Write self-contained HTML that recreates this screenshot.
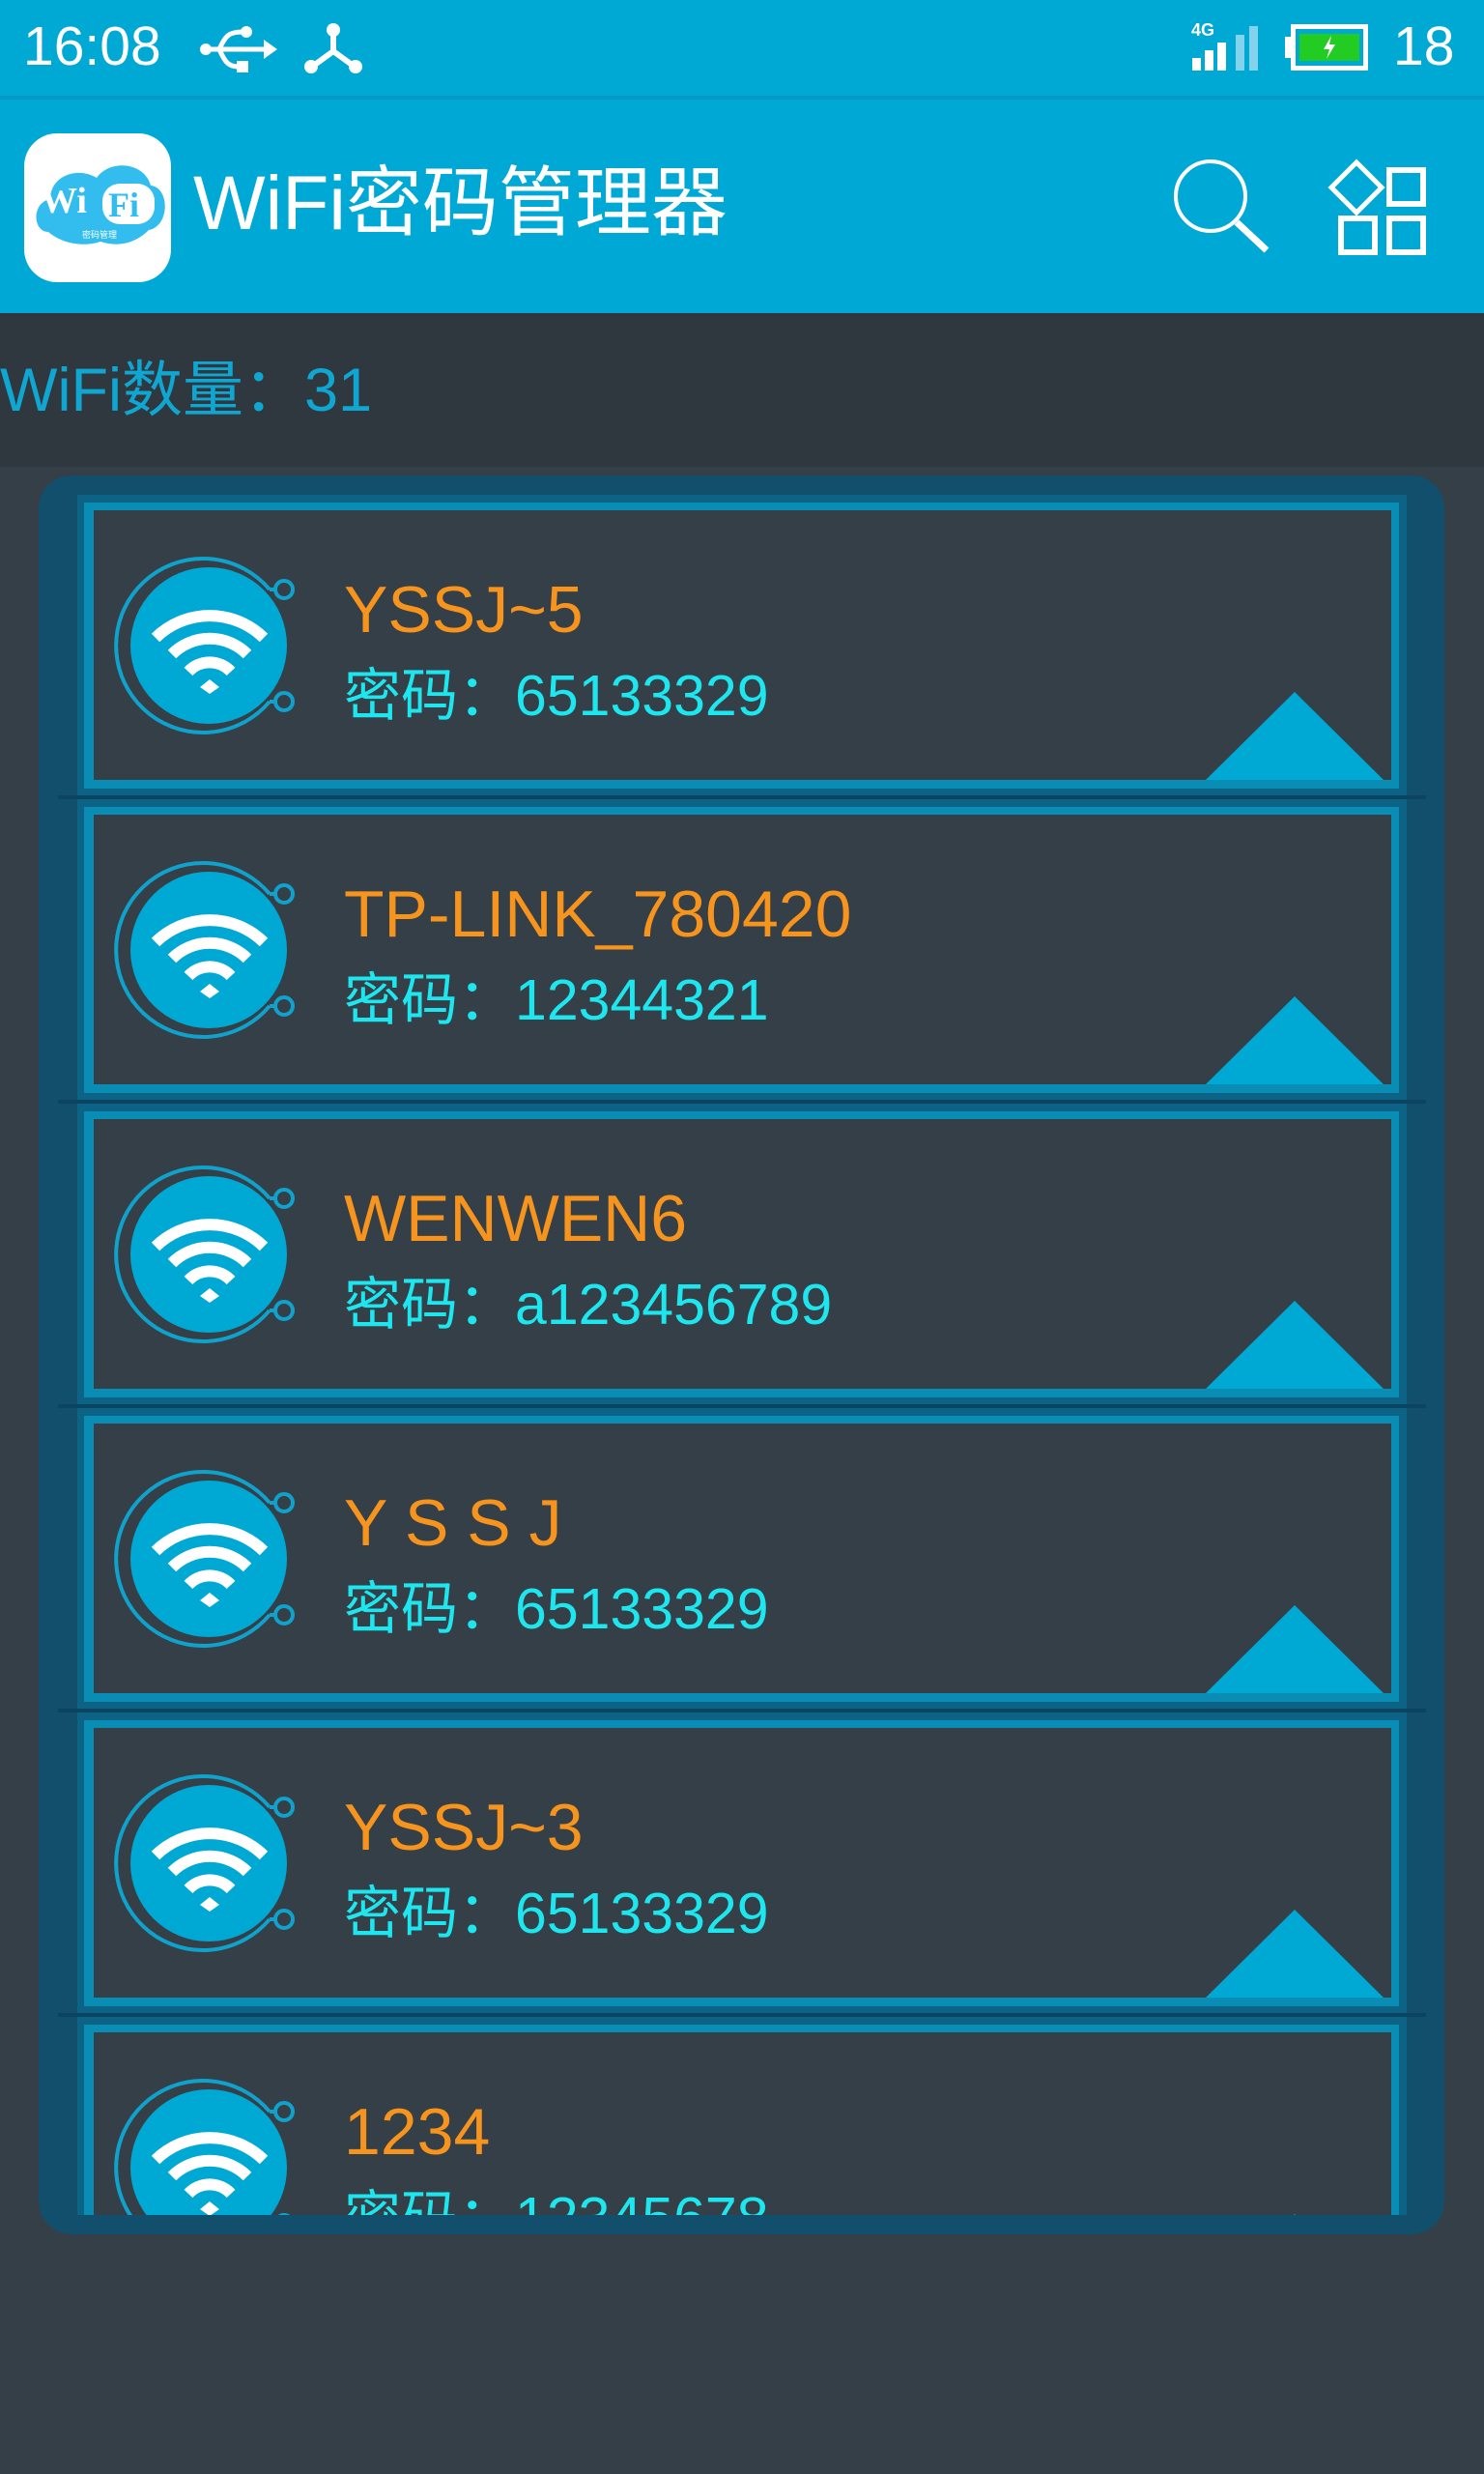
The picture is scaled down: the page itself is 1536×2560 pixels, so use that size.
<!DOCTYPE html>
<html><head><meta charset="utf-8"><style>
*{margin:0;padding:0;box-sizing:border-box}
body{width:1536px;height:2560px;background:#353f48;position:relative;overflow:hidden;font-family:"Liberation Sans","Noto Sans CJK SC",sans-serif}
.abs{position:absolute}
.item{position:absolute;left:80px;width:1376px;height:311px;background:#0c6386}
.cy{position:absolute;left:7px;top:8px;right:8px;bottom:7px;background:#0a8db5}
.dk{position:absolute;left:17px;top:16px;right:16px;bottom:16px;background:#353f48;overflow:hidden}
.sep{position:absolute;left:60px;width:1416px;height:4px;background:#0b4460}
.name{position:absolute;left:259px;top:69px;font-size:68px;color:#f7941d;white-space:nowrap;line-height:1}
.pw{position:absolute;left:259px;top:163px;font-size:59px;color:#1ee6ee;white-space:nowrap;line-height:1}
.tri{position:absolute;left:1151px;top:188px;width:0;height:0;border-left:92px solid transparent;border-right:92px solid transparent;border-bottom:91px solid #00a8d4}
.ic{position:absolute;left:0;top:0}
</style></head><body>
<div class="abs" style="left:0;top:0;width:1536px;height:101px;background:#00a8d4"></div>
<div class="abs" style="left:0;top:99px;width:1536px;height:4px;background:#0499c4"></div>
<div class="abs" style="left:24px;top:20px;font-size:57px;color:#fff;line-height:1">16:08</div>
<svg class="abs" style="left:205px;top:25px" width="85" height="52" viewBox="0 0 85 52">
<circle cx="8" cy="26" r="6" fill="#fff"/><path d="M8 26H72" stroke="#fff" stroke-width="5"/><path d="M68 16L82 26L68 36Z" fill="#fff"/>
<path d="M22 26C28 12 32 8 46 8" stroke="#fff" stroke-width="5" fill="none"/><circle cx="50" cy="8" r="6" fill="#fff"/>
<path d="M22 26C28 40 32 44 42 44" stroke="#fff" stroke-width="5" fill="none"/><rect x="40" y="38" width="12" height="12" fill="#fff"/></svg>
<svg class="abs" style="left:313px;top:23px" width="64" height="54" viewBox="0 0 64 54">
<path d="M32 8V30L10 46M32 30L54 46" stroke="#fff" stroke-width="6" fill="none"/><circle cx="32" cy="8" r="7" fill="#fff"/><circle cx="9" cy="46" r="7" fill="#fff"/><circle cx="55" cy="46" r="7" fill="#fff"/></svg>
<div class="abs" style="left:1233px;top:22px;font-size:18px;font-weight:bold;color:#fff;line-height:1">4G</div>
<div class="abs" style="left:1234px;top:60px;width:9px;height:13px;background:#fff"></div>
<div class="abs" style="left:1247px;top:52px;width:9px;height:21px;background:#fff"></div>
<div class="abs" style="left:1260px;top:44px;width:9px;height:29px;background:#fff"></div>
<div class="abs" style="left:1279px;top:36px;width:9px;height:37px;background:#84d3ec"></div>
<div class="abs" style="left:1293px;top:27px;width:9px;height:46px;background:#84d3ec"></div>
<div class="abs" style="left:1330px;top:38px;width:6px;height:22px;background:#fff"></div>
<div class="abs" style="left:1336px;top:25px;width:80px;height:48px;border:5px solid #fff"></div>
<div class="abs" style="left:1345px;top:35px;width:62px;height:28px;background:#22cc22"></div>
<svg class="abs" style="left:1365px;top:36px" width="22" height="26" viewBox="0 0 22 26"><path d="M13 1L5 15H11L8 25L17 10H11Z" fill="#fff"/></svg>
<div class="abs" style="left:1442px;top:20px;font-size:57px;color:#fff;line-height:1">18</div>
<div class="abs" style="left:0;top:103px;width:1536px;height:221px;background:#00a9d5"></div>
<div class="abs" style="left:25px;top:138px;width:152px;height:154px;background:#fff;border-radius:34px"></div>
<svg class="abs" style="left:30px;top:160px" width="145" height="100" viewBox="0 0 145 100">
<path d="M20 80C4 80 2 50 22 46C22 22 50 12 70 24C84 4 120 8 126 32C146 34 146 74 124 78C110 92 92 96 74 90C56 96 34 92 20 80Z" fill="#33bdef"/>
<text x="12" y="60" font-family="Liberation Serif,serif" font-weight="bold" font-size="38" fill="#fff">Wi</text>
<rect x="76" y="30" width="54" height="42" rx="18" fill="#fff"/>
<text x="82" y="64" font-family="Liberation Serif,serif" font-weight="bold" font-size="36" fill="#33bdef">Fi</text>
<text x="55" y="86" font-size="9" fill="#fff" font-family="Noto Sans CJK SC,sans-serif">密码管理</text></svg>
<div class="abs" style="left:200px;top:170px;font-size:79px;color:#fff;line-height:1;white-space:nowrap">WiFi密码管理器</div>
<svg class="abs" style="left:1200px;top:150px" width="300" height="130" viewBox="1200 150 300 130">
<circle cx="1253" cy="203" r="36" stroke="#fff" stroke-width="4" fill="none"/>
<path d="M1280 230L1311 259" stroke="#fff" stroke-width="7"/>
<path d="M1404 168L1430 194L1404 220L1378 194Z" stroke="#fff" stroke-width="5" fill="none"/>
<rect x="1438" y="176" width="35" height="35" stroke="#fff" stroke-width="6" fill="none"/>
<rect x="1388" y="226" width="35" height="35" stroke="#fff" stroke-width="6" fill="none"/>
<rect x="1438" y="226" width="35" height="35" stroke="#fff" stroke-width="6" fill="none"/></svg>
<div class="abs" style="left:0;top:324px;width:1536px;height:159px;background:#2f373f"></div>
<div class="abs" style="left:0;top:373px;font-size:63px;color:#10a6d2;line-height:1;white-space:nowrap">WiFi数量：31</div>
<div class="abs" style="left:40px;top:492px;width:1455px;height:1820px;background:#114f6c;border-radius:34px"></div>
<div id="list" class="abs" style="left:0;top:0;width:1536px;height:2292px;overflow:hidden"></div>
<script>
var data=[["YSSJ~5","65133329"],["TP-LINK_780420","12344321"],["WENWEN6","a123456789"],["Y S S J","65133329"],["YSSJ~3","65133329"],["1234","12345678"]];
var icon='<svg class="ic" width="260" height="279" viewBox="0 0 260 279">'+
'<path d="M182 82A90 90 0 1 0 182 198" stroke="#0fa2cc" stroke-width="4" fill="none"/>'+
'<path d="M182 82L189 82M182 198L189 198" stroke="#0fa2cc" stroke-width="4"/>'+
'<circle cx="197" cy="82" r="9" stroke="#0fa2cc" stroke-width="4" fill="none"/>'+
'<circle cx="197" cy="198" r="9" stroke="#0fa2cc" stroke-width="4" fill="none"/>'+
'<circle cx="119" cy="140" r="81" fill="#00a8d4"/>'+
'<path d="M64 132A80 80 0 0 1 176 132" stroke="#fff" stroke-width="12" fill="none"/>'+
'<path d="M81 149A55 55 0 0 1 159 149" stroke="#fff" stroke-width="12" fill="none"/>'+
'<path d="M98 167A30 30 0 0 1 142 167" stroke="#fff" stroke-width="12" fill="none"/>'+
'<path d="M120 175L130 183L120 190L110 183Z" fill="#fff"/></svg>';
var h="";
for(var i=0;i<data.length;i++){var t=512+315*i;
h+='<div class="item" style="top:'+t+'px"><div class="cy"></div><div class="dk">'+icon+
'<div class="name">'+data[i][0]+'</div><div class="pw">密码：'+data[i][1]+'</div><div class="tri"></div></div></div>'+
'<div class="sep" style="top:'+(t+311)+'px"></div>';}
document.getElementById("list").innerHTML=h;
</script>
</body></html>
